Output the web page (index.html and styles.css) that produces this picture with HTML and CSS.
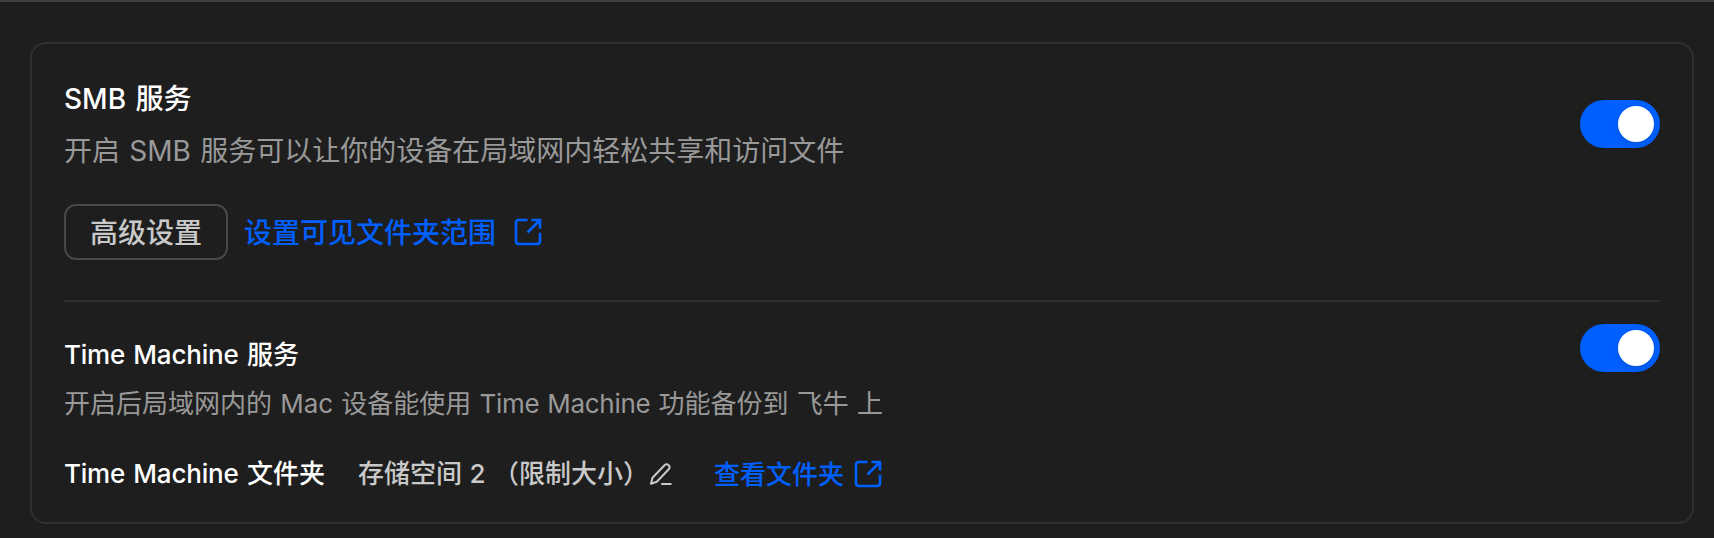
FILE: index.html
```html
<!DOCTYPE html>
<html lang="zh-CN">
<head>
<meta charset="utf-8">
<title>SMB 服务</title>
<link rel="stylesheet" href="styles.css">
</head>
<body>
<main class="page">
  <section class="card">
    <div class="service service-smb">
      <div class="info">
        <h2 class="title title-lg">SMB 服务</h2>
        <p class="desc desc-lg">开启 SMB 服务可以让你的设备在局域网内轻松共享和访问文件</p>
        <div class="actions">
          <button class="btn" type="button">高级设置</button>
          <a class="link link-lg"><span class="link-text">设置可见文件夹范围</span>
            <svg class="icon-open" viewBox="0 0 28 28"><path d="M13.500 2H5Q2 2 2 5v18q0 3 3 3h18q3 0 3-3v-8.300M17.500 2H26v8.500M26 2 13.500 14.500"/></svg></a>
        </div>
      </div>
      <div class="switch"><span class="knob"></span></div>
    </div>
    <div class="service service-tm">
      <div class="info">
        <h2 class="title"><span class="latin">Time Machine</span> 服务</h2>
        <p class="desc">开启后局域网内的 Mac 设备能使用 <span class="latin">Time Machine</span> 功能备份到 飞牛 上</p>
        <div class="folder">
          <span class="title">
            <span class="latin">Time Machine</span> 文件夹</span>
          <span class="value">存储空间 2 <span class="limit">（限制大小）</span></span>
          <svg class="icon-edit" viewBox="0 0 24 24"><path d="M2 21.800 3.500 15.700 15.500 3.200Q17.500 1.400 19.700 3.200 21.500 5.200 19.800 7.200L7.800 19.700ZM12.200 22H22.500"/></svg>
          <a class="link"><span class="link-text">查看文件夹</span>
            <svg class="icon-open" viewBox="0 0 28 28"><path d="M13.500 2H5Q2 2 2 5v18q0 3 3 3h18q3 0 3-3v-8.300M17.500 2H26v8.500M26 2 13.500 14.500"/></svg></a>
        </div>
      </div>
      <div class="switch"><span class="knob"></span></div>
    </div>
  </section>
</main>
</body>
</html>
```
FILE: styles.css
```css
* { box-sizing: border-box; }
body {
  margin: 0;
  background: #1e1e1e;
  color: #fff;
  font-family: Inter, "Noto Sans CJK SC", sans-serif;
  font-size: 26px;
  white-space: nowrap;
}
.page {
  height: 538px;
  border-top: 2px solid #414141;
  padding: 40px 20px 14px 30px;
}
.card {
  height: 482px;
  border: 2px solid #303030;
  border-radius: 16px;
  padding: 0 32px;
}
.service { display: flex; justify-content: space-between; }
.service-smb { height: 258px; padding-top: 35px; border-bottom: 2px solid #303030; }
.service-smb .switch { margin-top: 21px; }
.service-tm { padding-top: 22px; }
.service-tm .info { padding-top: 11px; }
.title {
  margin: 0;
  font-size: 26px;
  line-height: 40px;
  font-weight: 500;
  word-spacing: 1.5px;
}
.title-lg { font-size: 28px; word-spacing: 2px; }
.latin { letter-spacing: -.2px; }
.desc {
  margin: 9px 0 0;
  line-height: 40px;
  color: #999;
  word-spacing: .9px;
}
.desc .latin { letter-spacing: -.3px; }
.desc-lg { font-size: 28px; margin-top: 12px; word-spacing: 1.4px; }
.actions { display: flex; align-items: center; gap: 16px; margin-top: 33px; }
.btn {
  width: 164px;
  height: 56px;
  padding: 2px 0 0;
  background: none;
  border: 2px solid #484848;
  border-radius: 12px;
  color: #c9c9c9;
  font: 500 28px/1 Inter, "Noto Sans CJK SC", sans-serif;
}
.link {
  display: flex;
  align-items: center;
  gap: 10px;
  color: #0060ff;
  font-weight: 500;
  line-height: 40px;
}
.link-lg { font-size: 28px; gap: 18px; }
.link-text { padding-top: 2px; }
.icon-open, .icon-edit { fill: none; stroke: currentColor; flex: none; }
.icon-open { width: 28px; height: 28px; stroke-width: 2.6; }
.icon-edit { width: 24px; height: 24px; stroke-width: 2; color: #c9c9c9; stroke-linejoin: round; }
.folder { display: flex; align-items: center; margin-top: 29px; }
.value { margin-left: 33px; color: #c9c9c9; font-weight: 500; line-height: 40px; word-spacing: .6px; }
.limit { line-height: 1; }
.folder .link { margin-left: 41px; }
.switch {
  display: flex;
  justify-content: flex-end;
  width: 80px;
  height: 48px;
  padding: 6px;
  border-radius: 24px;
  background: #0060ff;
}
.knob {
  width: 36px;
  height: 36px;
  border-radius: 50%;
  background: #fff;
  box-shadow: 0 4px 8px rgba(0, 35, 11, .12);
}
```
